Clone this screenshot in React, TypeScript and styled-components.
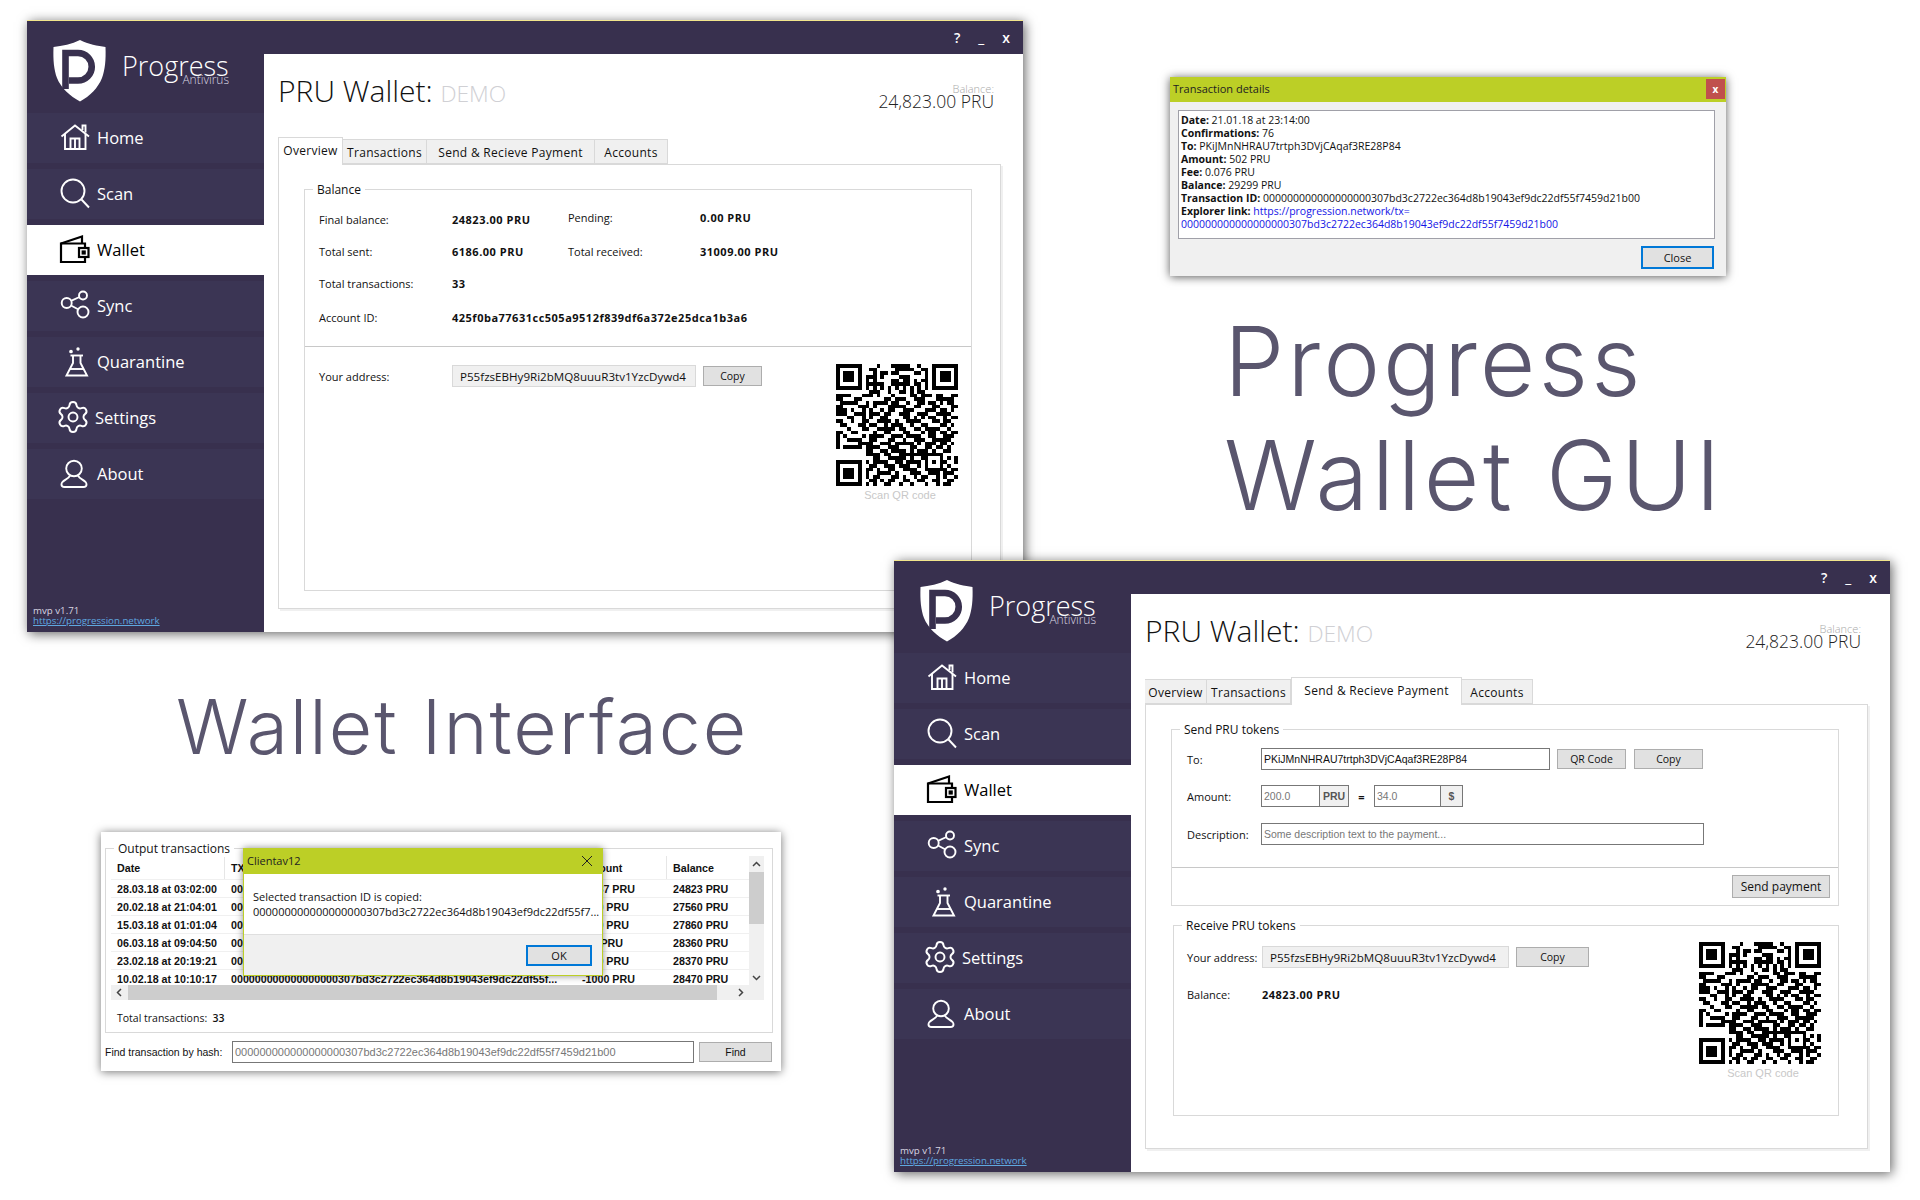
import React from "react";
import styled, { createGlobalStyle } from "styled-components";
import { Settings } from "lucide-react";

const UI_FONT = `"Open Sans", "Liberation Sans", sans-serif`;
const ARIAL = `"Liberation Sans", Arial, sans-serif`;

const GlobalStyle = createGlobalStyle`
  html, body {
    margin: 0;
    padding: 0;
    background: #fff;
  }
  * {
    box-sizing: border-box;
  }
`;

const Canvas = styled.div`
  position: relative;
  width: 1920px;
  height: 1200px;
  overflow: hidden;
  background: #fff;
  font-family: ${UI_FONT};
`;

const Headline = styled.div<{ $x: number; $y: number; $size: number; $track: number }>`
  position: absolute;
  left: ${(p) => p.$x}px;
  top: ${(p) => p.$y}px;
  font-family: Inter, "Open Sans", sans-serif;
  font-weight: 300;
  font-size: ${(p) => p.$size}px;
  letter-spacing: ${(p) => p.$track}px;
  line-height: 1;
  color: #5a566e;
  white-space: nowrap;
`;

/* main wallet window */
const Window = styled.section<{ $x: number; $y: number }>`
  position: absolute;
  left: ${(p) => p.$x}px;
  top: ${(p) => p.$y}px;
  width: 996px;
  height: 612px;
  display: flex;
  background: #fff;
  border-top: 1px solid #f2e58c;
  box-shadow: 2px 2px 11px rgba(0, 0, 0, 0.6);
`;

const Sidebar = styled.aside`
  width: 237px;
  flex: none;
  display: flex;
  flex-direction: column;
  background: #38304e;
`;

const Brand = styled.div`
  height: 92px;
  display: flex;
  padding: 11px 0 0 18px;
`;

const ShieldSvg = styled.svg`
  flex: none;
  width: 70px;
  height: 80px;
`;

const BrandText = styled.div`
  margin: 18px 0 0 7px;
  width: 107px;
  color: #fff;
`;

const BrandName = styled.div`
  font-size: 27px;
  font-weight: 300;
  line-height: 32px;
`;

const BrandSub = styled.div`
  margin-top: -9px;
  font-size: 12px;
  line-height: 13px;
  font-weight: 300;
  text-align: right;
  color: #d8d6e2;
`;

const Nav = styled.nav`
  display: flex;
  flex-direction: column;
  gap: 6px;
`;

const NavItem = styled.div<{ $active?: boolean; $tight?: boolean }>`
  height: 50px;
  display: flex;
  align-items: center;
  gap: ${(p) => (p.$tight ? 5 : 7)}px;
  padding: 0 0 2px 31px;
  font-size: 16.5px;
  background: ${(p) => (p.$active ? "#fff" : "#3b3554")};
  color: ${(p) => (p.$active ? "#000" : "#fff")};
`;

const NavIcon = styled.svg`
  width: 32px;
  height: 32px;
  flex: none;
  fill: none;
  stroke: currentColor;
  stroke-width: 1.9;
`;

const WalletNavIcon = styled(NavIcon)`
  stroke-width: 2.2;
`;

const GearIcon = styled(Settings)`
  width: 36px;
  height: 36px;
  flex: none;
  margin: 0 -1px 0 -3px;
  stroke-width: 1.3;
`;

const SideFooter = styled.div`
  margin-top: auto;
  padding: 0 0 6px 6px;
  font-size: 9.7px;
  line-height: 10px;
  color: #d8d6e2;
`;

const SideLink = styled.div`
  color: #5fa8e0;
  text-decoration: underline;
`;

const Main = styled.div`
  flex: 1;
  min-width: 0;
  display: flex;
  flex-direction: column;
`;

const TitleBar = styled.div`
  height: 33px;
  flex: none;
  display: flex;
  align-items: center;
  justify-content: flex-end;
  gap: 18px;
  padding-right: 13px;
  background: #38304e;
  color: #fff;
  font-size: 14px;
  font-weight: 600;
`;

const Body = styled.div`
  flex: 1;
  display: flex;
  flex-direction: column;
  padding: 0 22px 23px 14px;
`;

const Header = styled.header`
  height: 83px;
  display: flex;
  justify-content: space-between;
  padding: 19px 7px 0 0;
`;

const Title = styled.h1`
  margin: 0;
  font-size: 30px;
  line-height: 36px;
  font-weight: 300;
  color: #111;
`;

const Demo = styled.span`
  font-size: 22.8px;
  color: #d0d0d4;
`;

const BalanceBox = styled.div`
  margin-top: 10px;
  text-align: right;
  color: #222;
  font-size: 17.5px;
  font-weight: 300;
  line-height: 20px;
`;

const BalanceLabel = styled.div`
  margin-bottom: -4px;
  font-size: 11px;
  line-height: 12px;
  color: #a8a8a8;
`;

const Tabs = styled.div`
  display: flex;
  align-items: flex-end;
  height: 27px;
  font-size: 12px;
  letter-spacing: 0.3px;
`;

const Tab = styled.div<{ $active?: boolean; $w: number }>`
  width: ${(p) => p.$w}px;
  height: ${(p) => (p.$active ? 28 : 25)}px;
  margin-bottom: ${(p) => (p.$active ? -1 : 0)}px;
  display: flex;
  align-items: center;
  justify-content: center;
  padding: ${(p) => (p.$active ? "0 0 2px" : "2px 0 0")};
  background: ${(p) => (p.$active ? "#fff" : "#f0f0f0")};
  border: 1px solid #d9d9d9;
  border-bottom: ${(p) => (p.$active ? "none" : "1px solid #d9d9d9")};
  border-left: ${(p) => (p.$active ? "1px solid #d9d9d9" : "none")};
  color: #111;
  position: relative;
  z-index: ${(p) => (p.$active ? 1 : 0)};
`;

const Pane = styled.div`
  flex: 1;
  display: flex;
  flex-direction: column;
  padding: 24px 28px 17px 25px;
  border: 1px solid #d9d9d9;
  box-shadow: 2px 2px 0 #f0f0f0;
  color: #111;
  font-size: 11px;
`;

const Group = styled.div<{ $grow?: boolean; $shift?: number; $h?: number; $top?: number }>`
  position: relative;
  display: flex;
  flex-direction: column;
  flex: ${(p) => (p.$grow ? 1 : "none")};
  height: ${(p) => (p.$h ? `${p.$h}px` : "auto")};
  margin-left: ${(p) => p.$shift ?? 0}px;
  margin-top: ${(p) => p.$top ?? 0}px;
  border: 1px solid #d9d9d9;
`;

const Legend = styled.div`
  position: absolute;
  top: -8px;
  left: 8px;
  padding: 0 4px;
  background: #fff;
  font-size: 12px;
  line-height: 16px;
  color: #111;
`;

const StatsGrid = styled.div`
  display: grid;
  grid-template-columns: 133px 116px 132px 1fr;
  grid-auto-rows: 20px;
  row-gap: 12px;
  align-items: center;
  padding: 19px 14px 21px;
  border-bottom: 1px solid #c8c8c8;
`;

const Label = styled.div<{ $lift?: boolean; $w?: number }>`
  width: ${(p) => (p.$w ? `${p.$w}px` : "auto")};
  flex: none;
  margin-top: ${(p) => (p.$lift ? -4 : 0)}px;
  white-space: nowrap;
`;

const Value = styled.div<{ $lift?: boolean }>`
  margin-top: ${(p) => (p.$lift ? -4 : 0)}px;
  font-weight: 700;
  letter-spacing: 0.5px;
  white-space: nowrap;
`;

const WideValue = styled(Value)`
  grid-column: 2 / span 3;
`;

const AccountLabel = styled(Label)`
  margin-top: 4px;
`;

const AccountValue = styled(WideValue)`
  margin-top: 4px;
`;

const SplitRow = styled.div<{ $pad: string }>`
  flex: 1;
  display: flex;
  padding: ${(p) => p.$pad};
`;

const Fields = styled.div<{ $top?: number }>`
  flex: 1;
  display: flex;
  flex-direction: column;
  padding-top: ${(p) => p.$top ?? 0}px;
`;

const FieldRow = styled.div<{ $gap?: number; $top?: number; $indent?: number }>`
  display: flex;
  align-items: center;
  margin-top: ${(p) => p.$top ?? 0}px;
  margin-bottom: ${(p) => p.$gap ?? 0}px;
  padding-left: ${(p) => p.$indent ?? 0}px;
`;

const Address = styled.div<{ $w: number }>`
  width: ${(p) => p.$w}px;
  height: 22px;
  display: flex;
  align-items: center;
  padding-left: 7px;
  background: #f0f0f0;
  border: 1px solid #d9d9d9;
  font-size: 11.6px;
  white-space: nowrap;
`;

const Button = styled.div<{ $w: number; $h?: number; $ml?: number; $size?: number }>`
  width: ${(p) => p.$w}px;
  height: ${(p) => p.$h ?? 20}px;
  margin-left: ${(p) => p.$ml ?? 0}px;
  flex: none;
  display: flex;
  align-items: center;
  justify-content: center;
  background: #e1e1e1;
  border: 1px solid #adadad;
  font-size: ${(p) => p.$size ?? 10.5}px;
  color: #111;
`;

const FocusButton = styled.div<{ $w: number; $h: number }>`
  width: ${(p) => p.$w}px;
  height: ${(p) => p.$h}px;
  display: flex;
  align-items: center;
  justify-content: center;
  background: #e1e1e1;
  border: 2px solid #0078d7;
  font-size: 11px;
  color: #111;
`;

const QrBlock = styled.div`
  width: 122px;
  flex: none;
  text-align: center;
`;

const QrSvg = styled.svg`
  display: block;
  width: 122px;
  height: 122px;
`;

const QrCaption = styled.div`
  margin: 2px 0 0 6px;
  font-family: ${ARIAL};
  font-size: 11px;
  line-height: 14px;
  color: #c8c8c8;
`;

const Input = styled.div<{ $w: number; $muted?: boolean; $size?: number }>`
  width: ${(p) => p.$w}px;
  height: 22px;
  flex: none;
  display: flex;
  align-items: center;
  padding-left: 2px;
  border: 1px solid #777;
  background: #fff;
  font-family: ${ARIAL};
  font-size: ${(p) => p.$size ?? 10.5}px;
  color: ${(p) => (p.$muted ? "#777" : "#111")};
  white-space: nowrap;
  overflow: hidden;
`;

const Addon = styled.div<{ $w: number }>`
  width: ${(p) => p.$w}px;
  height: 20px;
  margin-left: auto;
  display: flex;
  align-items: center;
  justify-content: center;
  background: #f0f0f0;
  border-left: 1px solid #777;
  font-weight: 700;
  color: #555;
`;

const Equals = styled.div`
  width: 25px;
  text-align: center;
  font-weight: 700;
`;

const SendFooter = styled.div`
  display: flex;
  justify-content: flex-end;
  margin-top: 22px;
  padding: 7px 8px 6px;
  border-top: 1px solid #c8c8c8;
`;

/* small dialogs */
const DetailsDialog = styled.section`
  position: absolute;
  left: 1170px;
  top: 77px;
  width: 556px;
  height: 199px;
  display: flex;
  flex-direction: column;
  background: #f0f0f0;
  box-shadow: 0 1px 9px rgba(0, 0, 0, 0.65);
`;

const OliveBar = styled.div<{ $h: number }>`
  height: ${(p) => p.$h}px;
  flex: none;
  display: flex;
  align-items: center;
  justify-content: space-between;
  padding: 0 0 2px 3px;
  background: #bccf26;
  font-size: 11px;
  color: #222;
`;

const CloseBox = styled.div`
  width: 19px;
  height: 20px;
  margin-right: 1px;
  display: flex;
  align-items: center;
  justify-content: center;
  background: #c0504d;
  color: #fff;
  font-size: 10px;
  font-weight: 700;
`;

const DetailsText = styled.div`
  margin: 8px 11px 0 8px;
  height: 129px;
  padding: 3px 2px;
  background: #fff;
  border: 1px solid #a0a0a8;
  font-size: 10.5px;
  line-height: 13px;
  color: #111;
`;

const DetailLine = styled.div`
  white-space: nowrap;
`;

const BlueText = styled.span`
  color: #1414e6;
`;

const DialogActions = styled.div<{ $pad: string }>`
  display: flex;
  justify-content: flex-end;
  padding: ${(p) => p.$pad};
`;

const TxCard = styled.section`
  position: absolute;
  left: 101px;
  top: 832px;
  width: 680px;
  height: 239px;
  padding: 16px 8px 8px 4px;
  background: #fff;
  box-shadow: 0 1px 9px rgba(0, 0, 0, 0.55);
  color: #111;
`;

const OutputGroup = styled(Group)`
  height: 185px;
  padding: 7px 8px 0 5px;
`;

const TxTableWrap = styled.div`
  display: grid;
  grid-template-columns: 1fr 15px;
  height: 129px;
`;

const TxList = styled.div`
  overflow: hidden;
  font-family: ${ARIAL};
  font-size: 10.7px;
  font-weight: 700;
`;

const TxRow = styled.div<{ $head?: boolean }>`
  display: grid;
  grid-template-columns: 114px 351px 91px 84px;
  height: ${(p) => (p.$head ? 24 : 18)}px;
  align-items: center;
  border-bottom: 1px solid #f0f0f0;
`;

const TxCell = styled.div<{ $head?: boolean }>`
  padding-left: 6px;
  height: 100%;
  display: flex;
  align-items: center;
  border-right: ${(p) => (p.$head ? "1px solid #e6e6e6" : "none")};
  white-space: nowrap;
  overflow: hidden;
`;

const VScroll = styled.div`
  display: flex;
  flex-direction: column;
  background: #f0f0f0;
`;

const VThumb = styled.div`
  height: 52px;
  margin-top: 1px;
  background: #cdcdcd;
`;

const ScrollGlyph = styled.div<{ $bottom?: boolean; $right?: boolean }>`
  display: flex;
  align-items: center;
  justify-content: center;
  flex: none;
  color: #444;
  height: 15px;
  width: 15px;
  margin-top: ${(p) => (p.$bottom ? "auto" : 0)};
  margin-left: ${(p) => (p.$right ? "auto" : 0)};
  margin-right: ${(p) => (p.$right ? 16 : 0)}px;
`;

const HScroll = styled.div`
  height: 15px;
  display: flex;
  background: #f0f0f0;
`;

const HThumb = styled.div`
  margin-left: 2px;
  width: 589px;
  background: #cdcdcd;
`;

const TotalLine = styled.div`
  margin: 11px 0 0 6px;
  font-size: 10.5px;
  line-height: 14px;
`;

const TotalCount = styled.span`
  font-weight: 600;
`;

const FindRow = styled.div`
  display: flex;
  align-items: center;
  margin-top: 8px;
  font-family: ${ARIAL};
  font-size: 10.5px;
`;

const FindLabel = styled.div`
  width: 127px;
  flex: none;
`;

const CopiedDialog = styled.div`
  position: absolute;
  left: 142px;
  top: 16px;
  width: 360px;
  height: 128px;
  display: flex;
  flex-direction: column;
  background: #fff;
  border: 1px solid #bccf26;
  box-shadow: 0 0 7px rgba(0, 0, 0, 0.45);
`;

const DialogCross = styled.svg`
  width: 14px;
  height: 14px;
  margin-right: 8px;
`;

const CopiedBody = styled.div`
  height: 60px;
  padding: 15px 0 0 9px;
  font-size: 11px;
  line-height: 15px;
  white-space: nowrap;
`;

const CopiedFooter = styled.div`
  flex: 1;
  display: flex;
  justify-content: flex-end;
  padding: 10px 10px 0 0;
  background: #f0f0f0;
  border-top: 1px solid #dfdfdf;
`;

const qrRows = [
  "000000000001000111110010000000000",
  "000000000110000011111001100000000",
  "000000000010110110000110100000000",
  "000000001110100001110000100000000",
  "000000001010000110110101100000000",
  "000000001111100111110110100000000",
  "000000001010101010101010100000000",
  "000000000111001001101011000000000",
  "111100011101000100001101110110011",
  "110001100000011011100111000111110",
  "011111001011110110010011011010110",
  "110000111010001111100110001100011",
  "111010010100101100111000111011010",
  "111001110111011001110011100111100",
  "000110010100110000110101011001011",
  "110010011001111010011110001101100",
  "011000110110010111001001100011010",
  "000100011001111101100110111100100",
  "110011000010011000110001011011011",
  "101000010111100111011110011001110",
  "100111100110001100100111001111100",
  "100000111100111011111010111011010",
  "101111101111001110001100110110100",
  "000000001100110111101011101001100",
  "000000001111011001111111000110000",
  "000000000011001111101001000100101",
  "000000001011110011011110000111001",
  "000000000110011101110010010000100",
  "000000001101001100111100001011011",
  "000000001001111010001110011101110",
  "000000001011000110100101100101001",
  "000000000110101100110011001100110",
  "000000001010011001001000100101100",
];

function squareRings(x: number, y: number, size: number) {
  // outer ring plus solid middle, evenodd gives the hole
  const mid = size - 4;
  return (
    `M${x} ${y}h${size}v${size}h-${size}z` +
    `M${x + 1} ${y + 1}h${size - 2}v${size - 2}h-${size - 2}z` +
    `M${x + 2} ${y + 2}h${mid}v${mid}h-${mid}z`
  );
}

function QrCode() {
  let d = "";
  qrRows.forEach((row, y) => {
    row.split("").forEach((c, x) => {
      if (c !== "1") return;
      // the finder and alignment squares are drawn apart
      if ((y < 8 && x < 8) || (y < 8 && x > 24) || (y > 24 && x < 8)) return;
      if (x >= 24 && x <= 28 && y >= 24 && y <= 28) return;
      d += `M${x} ${y}h1v1h-1z`;
    });
  });
  const rings =
    squareRings(0, 0, 7) + squareRings(26, 0, 7) + squareRings(0, 26, 7) + squareRings(24, 24, 5);
  return (
    <QrSvg viewBox="0 0 33 33" shapeRendering="crispEdges">
      <path d={d} fill="#000" />
      <path d={rings} fill="#000" fillRule="evenodd" />
    </QrSvg>
  );
}

function QrWithCaption() {
  return (
    <QrBlock>
      <QrCode />
      <QrCaption>Scan QR code</QrCaption>
    </QrBlock>
  );
}

function Shield() {
  return (
    <ShieldSvg viewBox="0 0 70 80">
      <path
        d="M35 8C27 12 17 14 8.5 15C8 28 9 38 12 46C16 56 25 64 35 69.5C45 64 53 56 57 46C60 38 61 28 60.5 15C53 14 43 12 35 8Z"
        fill="#fff"
      />
      <path
        d="M20.5 57V21H33A13.5 13.5 0 0 1 33 48.5H24"
        fill="none"
        stroke="#38304e"
        strokeWidth="6.6"
      />
    </ShieldSvg>
  );
}

function HomeIcon() {
  return (
    <NavIcon viewBox="0 0 32 32">
      <path d="M3.5 15.5L17 4.5L31 15.5" />
      <path d="M24.5 9V4.5H27.5V11.5" />
      <path d="M7 13V28H27.5V13" />
      <path d="M12.5 28V17.5H21.5V28" />
      <path d="M17 17.5V28" />
    </NavIcon>
  );
}

function ScanIcon() {
  return (
    <NavIcon viewBox="0 0 32 32">
      <circle cx="15" cy="14" r="11.5" />
      <path d="M23.5 22.5L31 30.5" />
    </NavIcon>
  );
}

function WalletIcon() {
  return (
    <WalletNavIcon viewBox="0 0 32 32">
      <path d="M27 15V10.5H3V29H27V24" />
      <path d="M3 10.5L24 3.5V10.5" />
      <rect x="21" y="15" width="9.5" height="9" />
      <rect x="24.7" y="18.5" width="2" height="2" fill="currentColor" />
    </WalletNavIcon>
  );
}

function SyncIcon() {
  return (
    <NavIcon viewBox="0 0 32 32">
      <circle cx="8.7" cy="14" r="5" />
      <circle cx="25" cy="6.5" r="4" />
      <circle cx="25" cy="23" r="5.5" />
      <path d="M13 11.8L21.5 8M13 16.5L20.5 20.5" />
    </NavIcon>
  );
}

function FlaskIcon() {
  return (
    <NavIcon viewBox="0 0 32 32">
      <circle cx="13" cy="6.5" r="0.9" fill="currentColor" />
      <circle cx="20" cy="4" r="1.7" fill="currentColor" stroke="none" />
      <path d="M12.5 10.5H25" />
      <path d="M15 10.5V18L8.5 30.5H29L22.5 18V10.5" />
      <path d="M12 24H25.5" />
    </NavIcon>
  );
}

function UserIcon() {
  return (
    <NavIcon viewBox="0 0 32 32">
      <circle cx="16" cy="11.5" r="7.8" />
      <path d="M12 18.5C10.5 23 3.5 22.5 3.5 27.5Q3.5 30 6.5 30H25.5Q28.5 30 28.5 27.5C28.5 22.5 21.5 23 20 18.5" />
    </NavIcon>
  );
}

function WalletSidebar() {
  return (
    <Sidebar>
      <Brand>
        <Shield />
        <BrandText>
          <BrandName>Progress</BrandName>
          <BrandSub>Antivirus</BrandSub>
        </BrandText>
      </Brand>
      <Nav>
        <NavItem>
          <HomeIcon />
          Home
        </NavItem>
        <NavItem>
          <ScanIcon />
          Scan
        </NavItem>
        <NavItem $active>
          <WalletIcon />
          Wallet
        </NavItem>
        <NavItem>
          <SyncIcon />
          Sync
        </NavItem>
        <NavItem>
          <FlaskIcon />
          Quarantine
        </NavItem>
        <NavItem $tight>
          <GearIcon />
          Settings
        </NavItem>
        <NavItem>
          <UserIcon />
          About
        </NavItem>
      </Nav>
      <SideFooter>
        mvp v1.71
        <SideLink>https://progression.network</SideLink>
      </SideFooter>
    </Sidebar>
  );
}

function WalletHeader() {
  return (
    <Header>
      <Title>
        PRU Wallet: <Demo>DEMO</Demo>
      </Title>
      <BalanceBox>
        <BalanceLabel>Balance:</BalanceLabel>
        24,823.00 PRU
      </BalanceBox>
    </Header>
  );
}

const tabs = [
  { name: "Overview", w: 65, w2: 62 },
  { name: "Transactions", w: 84, w2: 84 },
  { name: "Send & Recieve Payment", w: 168, w2: 171 },
  { name: "Accounts", w: 73, w2: 71 },
];

function WalletTabs({ active }: { active: number }) {
  return (
    <Tabs>
      {tabs.map((t, i) => (
        <Tab key={t.name} $active={i === active} $w={active === 0 ? t.w : t.w2}>
          {t.name}
        </Tab>
      ))}
    </Tabs>
  );
}

function OverviewPane() {
  return (
    <Pane>
      <Group $grow>
        <Legend>Balance</Legend>
        <StatsGrid>
          <Label>Final balance:</Label>
          <Value>24823.00 PRU</Value>
          <Label $lift>Pending:</Label>
          <Value $lift>0.00 PRU</Value>
          <Label>Total sent:</Label>
          <Value>6186.00 PRU</Value>
          <Label>Total received:</Label>
          <Value>31009.00 PRU</Value>
          <Label>Total transactions:</Label>
          <WideValue>33</WideValue>
          <AccountLabel>Account ID:</AccountLabel>
          <AccountValue>425f0ba77631cc505a9512f839df6a372e25dca1b3a6</AccountValue>
        </StatsGrid>
        <SplitRow $pad="17px 13px 0 14px">
          <Fields $top={1}>
            <FieldRow>
              <Label $w={133}>Your address:</Label>
              <Address $w={244}>P55fzsEBHy9Ri2bMQ8uuuR3tv1YzcDywd4</Address>
              <Button $w={59} $ml={7}>
                Copy
              </Button>
            </FieldRow>
          </Fields>
          <QrWithCaption />
        </SplitRow>
      </Group>
    </Pane>
  );
}

function PaymentPane() {
  return (
    <Pane>
      <Group $h={177}>
        <Legend>Send PRU tokens</Legend>
        <Fields>
          <FieldRow $gap={15} $top={18} $indent={15}>
            <Label $w={74}>To:</Label>
            <Input $w={289}>PKiJMnNHRAU7trtph3DVjCAqaf3RE28P84</Input>
            <Button $w={69} $ml={7}>
              QR Code
            </Button>
            <Button $w={69} $ml={8}>
              Copy
            </Button>
          </FieldRow>
          <FieldRow $gap={16} $indent={15}>
            <Label $w={74}>Amount:</Label>
            <Input $w={88} $muted>
              200.0
              <Addon $w={29}>PRU</Addon>
            </Input>
            <Equals>=</Equals>
            <Input $w={89} $muted>
              34.0
              <Addon $w={22}>$</Addon>
            </Input>
          </FieldRow>
          <FieldRow $indent={15}>
            <Label $w={74}>Description:</Label>
            <Input $w={443} $muted>
              Some description text to the payment...
            </Input>
          </FieldRow>
          <SendFooter>
            <Button $w={98} $h={23} $size={12}>
              Send payment
            </Button>
          </SendFooter>
        </Fields>
      </Group>
      <Group $h={191} $shift={2} $top={19}>
        <Legend>Receive PRU tokens</Legend>
        <SplitRow $pad="16px 17px 0 13px">
          <Fields $top={4}>
            <FieldRow $gap={19}>
              <Label $w={75}>Your address:</Label>
              <Address $w={247}>P55fzsEBHy9Ri2bMQ8uuuR3tv1YzcDywd4</Address>
              <Button $w={73} $ml={7}>
                Copy
              </Button>
            </FieldRow>
            <FieldRow>
              <Label $w={75}>Balance:</Label>
              <Value>24823.00 PRU</Value>
            </FieldRow>
          </Fields>
          <QrWithCaption />
        </SplitRow>
      </Group>
    </Pane>
  );
}

const txRows = [
  ["28.03.18 at 03:02:00", "-2737 PRU", "24823 PRU"],
  ["20.02.18 at 21:04:01", "-300 PRU", "27560 PRU"],
  ["15.03.18 at 01:01:04", "-500 PRU", "27860 PRU"],
  ["06.03.18 at 09:04:50", "-10 PRU", "28360 PRU"],
  ["23.02.18 at 20:19:21", "-100 PRU", "28370 PRU"],
  ["10.02.18 at 10:10:17", "-1000 PRU", "28470 PRU"],
];

const TX_ID = "000000000000000000307bd3c2722ec364d8b19043ef9dc22df55f...";
const FULL_ID = "000000000000000000307bd3c2722ec364d8b19043ef9dc22df55f7459d21b00";

function TransactionsCard() {
  return (
    <TxCard>
      <OutputGroup>
        <Legend>Output transactions</Legend>
        <TxTableWrap>
          <TxList>
            <TxRow $head>
              <TxCell $head>Date</TxCell>
              <TxCell $head>TX hash</TxCell>
              <TxCell $head>Amount</TxCell>
              <TxCell>Balance</TxCell>
            </TxRow>
            {txRows.map((r) => (
              <TxRow key={r[0]}>
                <TxCell>{r[0]}</TxCell>
                <TxCell>{TX_ID}</TxCell>
                <TxCell>{r[1]}</TxCell>
                <TxCell>{r[2]}</TxCell>
              </TxRow>
            ))}
          </TxList>
          <VScroll>
            <ScrollGlyph>
              <svg width="9" height="6" viewBox="0 0 9 6">
                <path d="M1 5L4.5 1.5L8 5" fill="none" stroke="#444" strokeWidth="1.5" />
              </svg>
            </ScrollGlyph>
            <VThumb />
            <ScrollGlyph $bottom>
              <svg width="9" height="6" viewBox="0 0 9 6">
                <path d="M1 1L4.5 4.5L8 1" fill="none" stroke="#444" strokeWidth="1.5" />
              </svg>
            </ScrollGlyph>
          </VScroll>
        </TxTableWrap>
        <HScroll>
          <ScrollGlyph>
            <svg width="6" height="9" viewBox="0 0 6 9">
              <path d="M5 1L1.5 4.5L5 8" fill="none" stroke="#444" strokeWidth="1.5" />
            </svg>
          </ScrollGlyph>
          <HThumb />
          <ScrollGlyph $right>
            <svg width="6" height="9" viewBox="0 0 6 9">
              <path d="M1 1L4.5 4.5L1 8" fill="none" stroke="#444" strokeWidth="1.5" />
            </svg>
          </ScrollGlyph>
        </HScroll>
        <TotalLine>
          Total transactions:&nbsp; <TotalCount>33</TotalCount>
        </TotalLine>
      </OutputGroup>
      <FindRow>
        <FindLabel>Find transaction by hash:</FindLabel>
        <Input $w={462} $muted $size={11}>
          {FULL_ID}
        </Input>
        <Button $w={73} $ml={5}>
          Find
        </Button>
      </FindRow>
      <CopiedDialog>
        <OliveBar $h={25}>
          Clientav12
          <DialogCross viewBox="0 0 14 14">
            <path d="M2 2L12 12M12 2L2 12" stroke="#222" strokeWidth="1" fill="none" />
          </DialogCross>
        </OliveBar>
        <CopiedBody>
          Selected transaction ID is copied:
          <br />
          000000000000000000307bd3c2722ec364d8b19043ef9dc22df55f7...
        </CopiedBody>
        <CopiedFooter>
          <FocusButton $w={66} $h={21}>
            OK
          </FocusButton>
        </CopiedFooter>
      </CopiedDialog>
    </TxCard>
  );
}

function TransactionDetails() {
  return (
    <DetailsDialog>
      <OliveBar $h={25}>
        Transaction details
        <CloseBox>x</CloseBox>
      </OliveBar>
      <DetailsText>
        <DetailLine>
          <strong>Date:</strong> 21.01.18 at 23:14:00
        </DetailLine>
        <DetailLine>
          <strong>Confirmations:</strong> 76
        </DetailLine>
        <DetailLine>
          <strong>To:</strong> PKiJMnNHRAU7trtph3DVjCAqaf3RE28P84
        </DetailLine>
        <DetailLine>
          <strong>Amount:</strong> 502 PRU
        </DetailLine>
        <DetailLine>
          <strong>Fee:</strong> 0.076 PRU
        </DetailLine>
        <DetailLine>
          <strong>Balance:</strong> 29299 PRU
        </DetailLine>
        <DetailLine>
          <strong>Transaction ID:</strong> {FULL_ID}
        </DetailLine>
        <DetailLine>
          <strong>Explorer link:</strong> <BlueText>https://progression.network/tx=</BlueText>
        </DetailLine>
        <DetailLine>
          <BlueText>{FULL_ID}</BlueText>
        </DetailLine>
      </DetailsText>
      <DialogActions $pad="7px 12px 0 0">
        <FocusButton $w={73} $h={23}>
          Close
        </FocusButton>
      </DialogActions>
    </DetailsDialog>
  );
}

function WalletWindow({ x, y, tab }: { x: number; y: number; tab: number }) {
  return (
    <Window $x={x} $y={y}>
      <WalletSidebar />
      <Main>
        <TitleBar>
          <span>?</span>
          <span>_</span>
          <span>x</span>
        </TitleBar>
        <Body>
          <WalletHeader />
          <WalletTabs active={tab} />
          {tab === 0 ? <OverviewPane /> : <PaymentPane />}
        </Body>
      </Main>
    </Window>
  );
}

export default function App() {
  return (
    <Canvas>
      <GlobalStyle />
      <WalletWindow x={27} y={20} tab={0} />
      <TransactionDetails />
      <Headline $x={1224} $y={313} $size={96} $track={3}>
        Progress
      </Headline>
      <Headline $x={1224} $y={427} $size={96} $track={3.6}>
        Wallet GUI
      </Headline>
      <Headline $x={176} $y={689} $size={75} $track={2}>
        Wallet Interface
      </Headline>
      <TransactionsCard />
      <WalletWindow x={894} y={560} tab={2} />
    </Canvas>
  );
}
